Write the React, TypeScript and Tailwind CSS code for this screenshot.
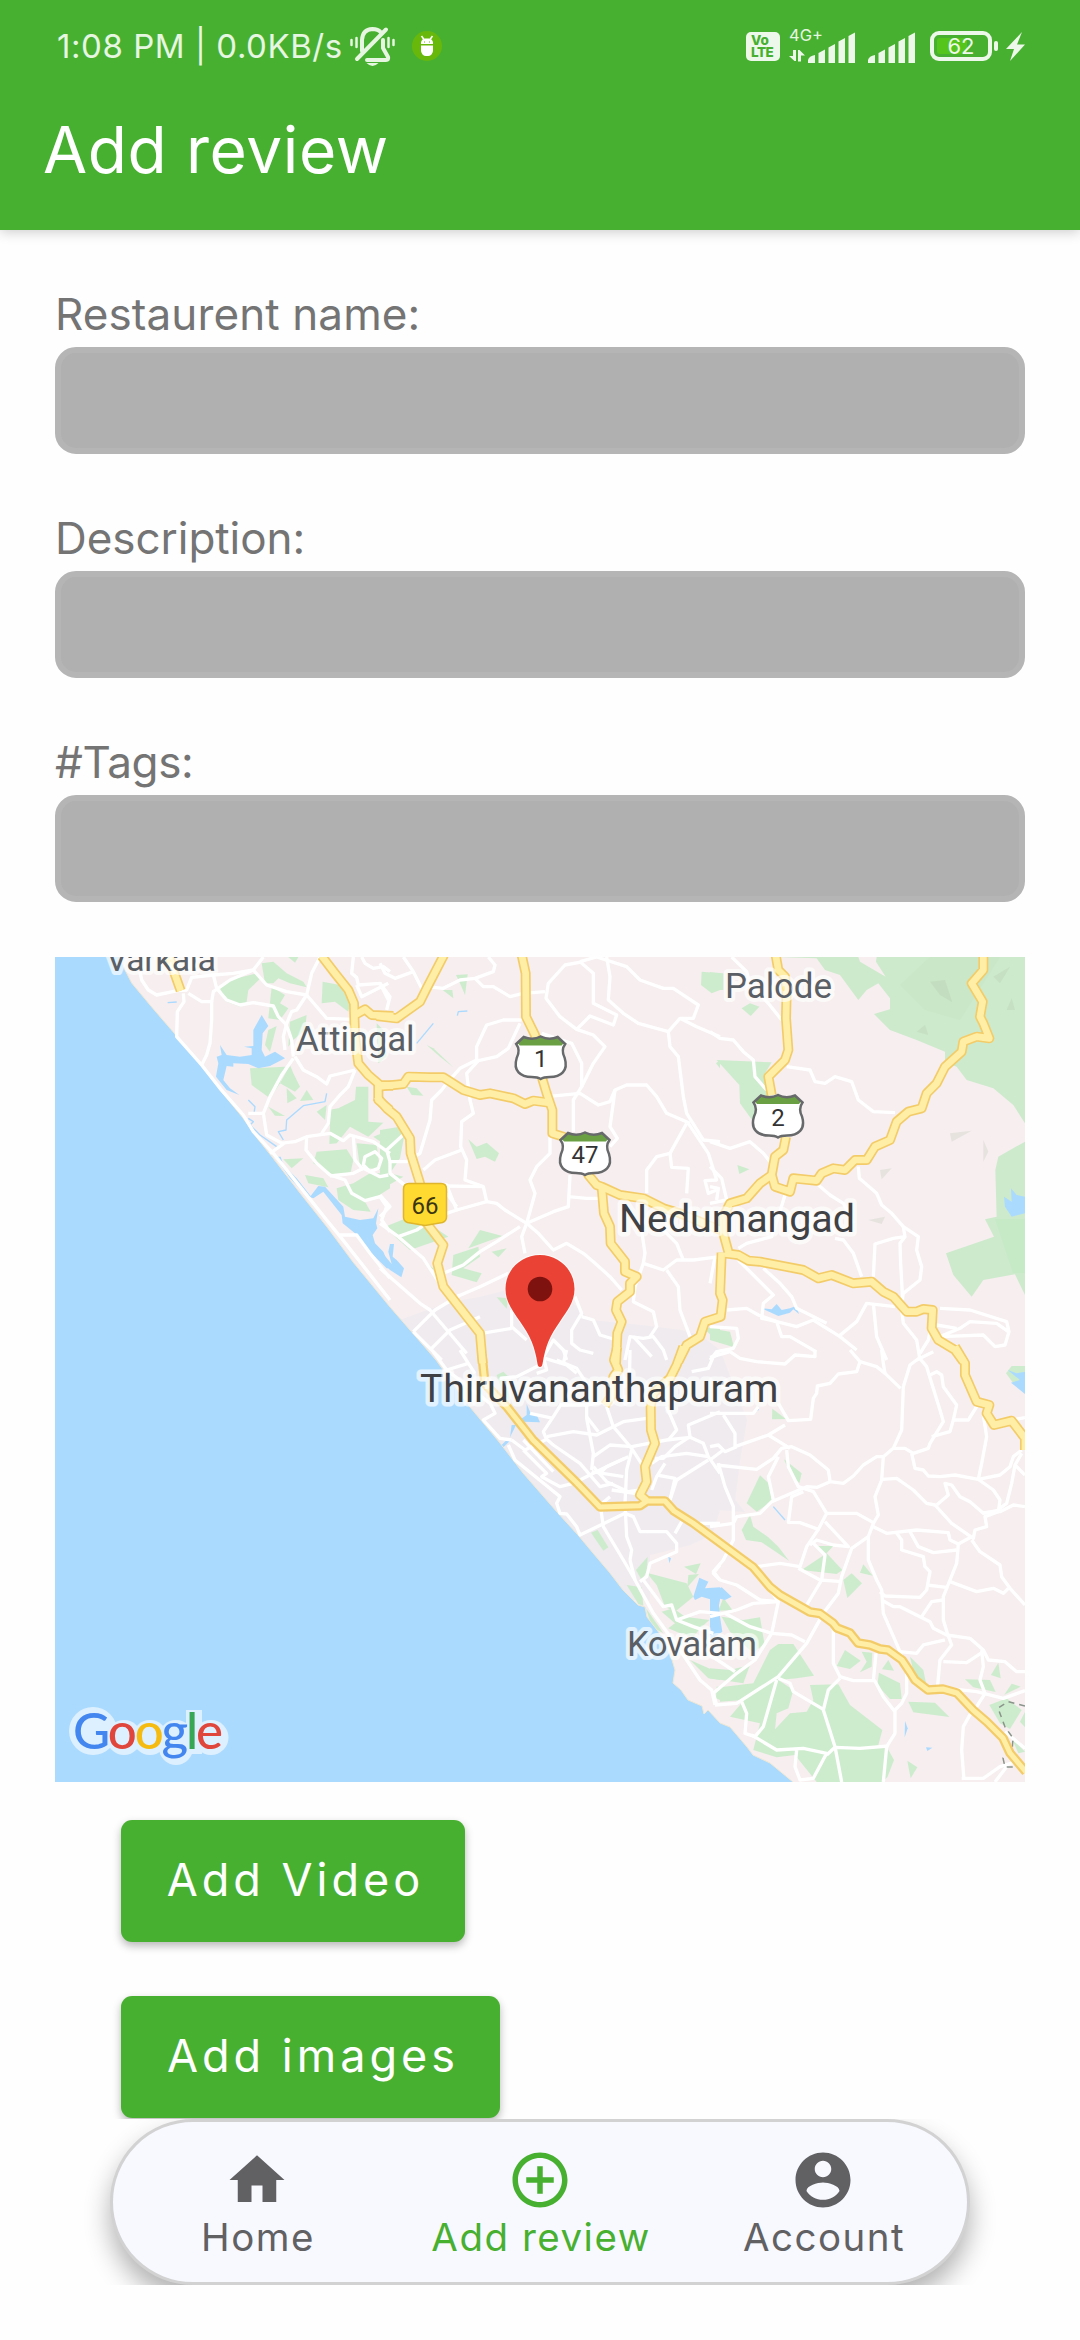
import type { ReactNode } from "react";

type Tile = { x: number; y: number; d: Partial<Record<Layer, string[]>> };
type Layer = "park" | "forest" | "relief" | "water" | "stream" | "street" | "highway";

/* Map geometry, split in tiles; every tile is drawn at three units per pixel. */
const tiles: Tile[] = [
  {
    x: 40,
    y: 940,
    d: {
      park: [
        "M540,145 570,120 650,100 665,112 625,150 620,185 600,200 560,185Z",
        "M665,70 700,65 740,100 790,125 800,142 750,130 715,115 700,130 675,130Z",
        "M745,51 775,51 765,68Z",
        "M848,125 900,135 930,190 925,215 885,185 845,190Z",
        "M695,140 735,165 720,190 745,205 720,240 685,235Z",
        "M685,270 710,258 690,335 675,315Z",
        "M750,245 800,225 795,270 760,300 745,320Z",
        "M630,385 735,380 720,430 690,475 635,435Z",
        "M750,375 760,400 780,440 765,455 720,430Z",
        "M740,445 770,475 742,490Z",
        "M800,450 820,480 780,483Z",
        "M685,500 735,528 705,527Z",
        "M948,440 985,440 985,545 1030,548 985,590 930,560 890,610 868,612 870,560 865,510 895,505 945,480Z",
        "M860,495 855,540 830,515Z",
        "M830,635 920,628 940,660 930,705 880,705 820,670Z",
        "M730,658 790,655 755,685Z",
        "M795,705 850,715 865,742 805,730Z",
        "M890,745 940,730 990,700 1050,700 1050,745 1010,770 975,785 992,815 940,810 895,780Z",
        "M1000,590 1050,570 1050,625Z",
        "M950,610 1010,615 1020,690 960,680Z",
        "M1010,250 1030,270 1040,350 1015,370Z",
      ],
      water: [
        "M665,225 685,258 668,280 665,330 675,350 705,335 735,355 690,378 655,385 625,372 580,370 580,380 560,378 550,420 570,445 598,465 560,450 528,410 535,370 530,350 545,345 540,315 560,345 600,350 635,345 635,325 612,320 640,318 640,270Z",
        "M705,650 722,650 730,675 770,715 812,768 835,738 855,740 910,800 915,830 960,840 1000,835 1015,805 1008,850 1012,865 998,885 1005,910 1030,935 1050,985 1040,985 990,935 945,880 908,850 905,825 850,755 820,775 800,768 750,715Z",
      ],
      stream: [
        "M625,480 645,500 642,520 M625,535 640,545 630,555 660,585 710,620",
        "M860,460 855,485 790,497 740,540 738,570 715,575 730,600",
        "M383,188 410,186",
      ],
      street: [
        "M300,95 305,120 325,150 350,165 412,152",
        "M412,152 440,150 455,112 520,105 580,100 640,90 670,51",
        "M430,160 432,185 412,215 410,290 485,375 540,445 610,525 640,575 700,640 780,740 860,840 905,895 1050,1080",
        "M445,160 485,185 515,185 515,240 510,310 500,345 485,375",
        "M515,185 520,155 570,120 640,90",
        "M520,105 530,145 560,180 600,195 640,188 700,198 715,230 735,250 745,270 755,300 760,350",
        "M640,90 680,135 740,155 800,165 860,235 940,238",
        "M840,51 815,100 800,165 770,210 755,215 740,250 730,290 735,330",
        "M765,350 790,390 830,410 860,432 870,408 945,390",
        "M760,355 725,405 690,470 670,520 625,520",
        "M670,520 680,585 730,612 690,640",
        "M720,610 765,605 800,590 870,580 910,602 930,585 1000,605 1050,640",
        "M945,390 925,440 900,465 870,500 865,550 845,580",
        "M800,590 798,630 830,670 870,705 915,720 935,760 975,782 1020,770 1040,800 1025,840 1050,875",
        "M870,708 940,700 970,685 1020,710 1045,705",
        "M940,590 945,660 970,690",
        "M975,650 1005,635 1025,655 1015,685 990,695 970,675Z",
        "M900,885 950,885 990,940 1050,1015",
        "M940,51 935,100 950,112 955,135 1020,130 1045,180",
        "M965,51 975,70 1000,85 1030,80 1050,95",
        "M950,135 965,170 1045,130",
      ],
      highway: [
        "M388,51 400,90 422,152",
        "M845,48 885,100 925,150 942,190 943,230 945,290 955,370 985,405 1020,435 1060,437",
        "M945,225 975,208 995,225 1060,228",
        "M1015,435 1015,480 1050,510",
      ],
    },
  },
  {
    x: 380,
    y: 940,
    d: {
      park: [
        "M0,570 60,560 75,575 60,655 30,700 70,710 0,750Z",
        "M265,598 290,620 320,608 357,640 345,665 315,650 290,657Z",
        "M228,105 263,103 255,165 240,130Z",
        "M188,150 217,150 220,175Z",
        "M965,95 1020,100 1020,150 995,160 963,135Z",
        "M80,440 110,445 130,467 95,465Z",
        "M140,315 160,325 220,382 180,350Z",
        "M15,860 90,830 160,860 205,890 90,930 50,895Z",
        "M300,870 367,888 265,925Z",
        "M220,945 295,920 300,950 250,985 305,1000 290,1027 215,1005Z",
        "M335,935 380,925 355,952Z",
        "M350,1072 385,1075 380,1106Z",
        "M115,945 165,990 150,985Z",
        "M970,1165 1020,1160 1020,1210Z",
        "M1008,370 1020,360 1020,385Z",
      ],
      water: ["M30,912 42,912 38,950 50,960 72,985 64,1012 30,990 0,960 0,930 35,972 25,935Z"],
      stream: ["M110,310 160,250", "M232,227 235,215 262,213"],
      street: [
        "M70,51 100,95 130,155",
        "M0,70 15,100 45,115 100,95",
        "M0,130 30,170 20,210",
        "M140,140 190,145 240,120 285,115 340,95 345,75 325,51",
        "M285,115 310,140 340,140 390,170 430,160 495,155",
        "M610,65 555,75 505,130 498,175 540,230 590,268 630,228 700,255 710,225 640,190 640,100 600,65",
        "M600,65 650,51 740,80 780,120 850,145 880,145 955,195 940,235 900,235 865,275 870,320 895,350 910,470 920,520 970,600 1020,605",
        "M680,51 690,110 685,180 730,220 775,250 865,275",
        "M900,235 950,260 1020,290",
        "M590,268 640,285 675,320 640,370 605,440",
        "M485,280 545,300 575,310 605,370 605,440 580,480 580,575",
        "M500,470 600,460 655,495 690,485 705,450 740,435 800,435 830,470 860,520 930,550",
        "M705,450 690,560 712,595 690,620",
        "M425,240 370,240 320,255 290,320 290,360 240,385 200,430 185,450 155,480 150,540 120,640 80,665 30,665 20,630 75,580",
        "M420,250 385,325 350,350 295,362 260,400 270,480 280,520 245,545 242,620 260,660 255,720 310,740 320,785 230,810",
        "M130,690 165,660 245,630",
        "M510,590 510,640 470,680 450,720 465,760 440,850 375,810 350,790 320,785",
        "M160,740 200,735 230,810 200,820",
        "M200,738 310,740",
        "M440,850 425,890 435,940",
        "M440,850 475,880 520,930 560,910 610,940 640,965 690,1010 725,1050",
        "M440,850 520,815 565,800 570,705",
        "M565,770 620,775 655,775",
        "M190,1000 250,975 300,935 350,905 420,860",
        "M230,1070 300,1040 385,1000",
        "M780,840 795,940 790,970 765,1040 760,1085 820,1115 830,1160 810,1190",
        "M790,970 850,990 890,960 940,960 1020,950",
        "M860,990 895,1040 900,1110 930,1190",
        "M800,760 800,690 830,650 870,640 920,550",
        "M870,640 875,682 925,685 920,760",
        "M925,550 985,640 1010,720 975,722 985,760 1010,750",
        "M780,840 850,870 890,910 910,960",
        "M585,1070 605,1120 575,1170 575,1210 600,1230 640,1240",
        "M605,1130 640,1140 660,1185 710,1200",
        "M395,1110 395,1160 440,1200",
        "M305,1180 395,1165",
        "M0,985 120,1090 150,1110 260,1240",
        "M0,850 55,890 130,955 185,1040",
        "M100,1175 165,1110 240,1065",
        "M100,1175 185,1260",
        "M150,1230 210,1170 300,1130",
        "M735,1260 750,1190 790,1195 820,1190 850,1230 860,1260",
        "M760,1190 815,1250",
        "M485,1260 520,1200 550,1230 560,1260",
        "M0,830 30,800 0,765",
        "M55,890 110,870 140,850",
        "M30,665 30,700 80,740",
        "M200,760 230,800",
      ],
      highway: [
        "M192,45 140,145 120,185 50,235 -10,228",
        "M-10,440 70,432 85,410 150,412 190,412 250,450 300,465 330,460 400,475 435,492 460,482 505,488",
        "M-10,470 20,505 50,530 90,595 92,640 120,730 140,850 190,915 172,970 190,1040 300,1180 308,1270",
        "M425,45 437,100 438,230 465,285 485,410 500,460 517,510 517,580 550,590 610,650 625,705 650,735 665,740 720,765 790,775 850,805 900,820 1020,870",
        "M665,740 672,820 690,860 692,910 735,965 735,995 770,1010 750,1030 750,1055 712,1085 708,1110 725,1145 712,1180 708,1270",
      ],
    },
  },
  {
    x: 710,
    y: 940,
    d: {
      park: [
        "M20,360 185,367 165,400 180,450 175,560 130,545 90,490 88,435Z",
        "M95,205 120,190 148,200 122,228Z",
        "M82,675 118,688 88,702Z",
        "M0,97 40,100 40,150 0,150Z",
        "M0,1165 60,1175 72,1222 0,1200Z",
      ],
      forest: [
        "M200,51 320,55 345,90 390,105 445,180 470,150 505,130 540,175 540,208 492,222 540,270 620,300 705,335 705,365 740,380 770,420 850,445 910,495 945,550 945,51 500,51 498,65 527,110 450,65 445,51Z",
        "M945,605 865,650 856,690 860,830 825,838 852,890 708,940 730,1005 785,1070 820,1020 915,1003 945,1065Z",
      ],
      relief: [
        "M660,125 705,120 727,187 690,165Z",
        "M850,110 900,80 870,130Z",
        "M620,275 645,255 655,285Z",
        "M890,210 905,175 915,210Z",
        "M720,580 785,572 725,605Z",
        "M510,690 545,685 515,718Z",
        "M820,600 835,635 820,665Z",
        "M475,840 525,830 515,852Z",
      ],
      water: [
        "M882,770 905,785 903,745 920,765 945,770 945,820 905,830 885,800Z",
        "M155,1105 185,1108 200,1092 215,1110 240,1105 258,1098 267,1122 250,1108 240,1118 205,1128Z",
      ],
      street: [
        "M65,51 110,95 120,130 175,190 215,240",
        "M0,275 30,295 70,300 100,335 130,360 135,410 170,450",
        "M230,380 300,390 315,425 345,430 375,410 425,425 445,480 490,515 555,518",
        "M0,605 60,625 120,605 160,640 180,665",
        "M0,680 35,715 50,780 0,790",
        "M0,740 25,745 20,780",
        "M325,735 360,765 400,790 430,850",
        "M375,895 400,900 430,940 455,1010",
        "M445,680 448,715 500,760 515,795 545,820 580,860 625,890 620,930 635,980 630,1020 580,1060 575,1085",
        "M580,860 585,890 570,910 572,970 578,1080",
        "M585,890 550,895 495,912 490,1010",
        "M225,765 205,830 185,890 110,910 85,925",
        "M85,960 190,1065 160,1090 155,1135 200,1145 215,1190 240,1190 318,1235",
        "M50,1110 110,1105 145,1125 200,1145 260,1160 310,1140 390,1190 440,1230",
        "M160,985 210,1030 245,1070 260,1105 350,1150",
        "M385,1190 440,1145 470,1090 555,1100",
        "M490,1090 500,1190 530,1260",
        "M575,1110 580,1150 620,1200 630,1260",
        "M690,1105 780,1110 890,1145 897,1175 885,1215 855,1220 820,1185 690,1190 750,1165 780,1145 860,1150 895,1175",
        "M680,1155 740,1165",
        "M665,1150 655,1200 630,1240",
        "M0,1160 80,1165 85,1195 70,1225 20,1235 0,1260",
        "M15,950 0,1030",
      ],
      highway: [
        "M197,45 205,90 225,110 230,150 228,235 235,330 225,360 175,410 185,465",
        "M228,590 220,630 195,650 185,705 150,730 110,775 60,790 40,830 40,880 55,935",
        "M185,705 195,740 240,755 250,715 320,722 335,700 370,685 405,690 435,660 470,660 495,620 540,600 560,545 595,515 635,505 650,460 680,430 705,380 755,335 760,305 800,290 838,295 820,250 810,230 818,185 785,130 820,90 820,45",
        "M45,940 85,945 115,962 150,965 280,990 325,1015 365,1005 430,1030 485,1025 520,1055 550,1070 590,1115 620,1115 640,1107 668,1110 665,1165 685,1200 735,1230 760,1265",
        "M35,938 30,1060 38,1080 32,1130 -15,1145 -30,1190 -70,1215 -95,1265",
      ],
    },
  },
  {
    x: 380,
    y: 1350,
    d: {
      park: [
        "M633,548 653,540 685,592 670,602Z",
        "M768,660 803,620 800,665 785,690Z",
        "M800,668 920,700 940,740 885,785 855,770 830,705Z",
        "M740,705 785,712 790,767 775,762Z",
        "M925,675 957,672 922,712Z",
        "M912,650 962,640 948,672Z",
        "M845,785 880,775 915,800 988,810 960,835 940,862 900,850 865,835 885,820Z",
        "M798,775 850,850 815,830Z",
        "M930,930 1020,970 1020,990 985,985Z",
        "M350,75 370,65 390,85 385,150 365,120Z",
        "M1010,1010 1020,1010 1020,1050 1008,1045Z",
      ],
      water: [
        "M440,162 450,185 470,195 480,217 430,215 423,207 440,195Z",
        "M958,683 985,695 975,715 1020,712 1020,750 1000,850 998,750 965,740 945,750 940,740Z",
        "M362,288 385,265 392,270 370,292Z",
        "M395,225 408,225 390,262Z",
        "M865,620 873,625 868,640Z",
      ],
      street: [
        "M160,5 200,60 265,40 240,0",
        "M265,40 285,70",
        "M200,60 330,160 345,190 310,210 360,265 395,270",
        "M385,285 405,330 540,440 530,460 540,490 560,492 590,530 600,555 735,490",
        "M395,270 435,300 500,268 520,285 600,340 660,410 700,400",
        "M430,300 500,370 485,380 540,410 580,400 640,370 690,345 745,320",
        "M430,270 520,365",
        "M500,270 490,245 520,200 545,160",
        "M500,260 580,245 650,255 730,215 800,205",
        "M490,20 500,60 470,70",
        "M495,25 560,45 590,70",
        "M620,165 620,205 640,310 635,360",
        "M620,200 655,245",
        "M680,170 700,230 755,295 790,350",
        "M755,300 740,360 735,460 740,560 755,600 750,630",
        "M640,320 690,285 755,290 860,270 930,262 970,280 985,320 920,310 845,320 815,340",
        "M640,350 680,395 745,425 780,420",
        "M635,365 730,380",
        "M695,420 780,432",
        "M660,460 670,530 730,630 765,690 820,790 900,900 960,990 995,1020 1005,1065",
        "M735,490 760,500 780,545 860,545 890,580 890,605 810,640 800,680 780,695",
        "M750,630 765,690",
        "M790,690 850,770 875,765 890,810 940,830 1000,850",
        "M890,810 960,785 1020,790",
        "M885,550 905,515",
        "M870,450 890,390 985,330",
        "M825,325 850,325 885,290 930,260 925,225 1020,185",
        "M985,320 1020,370",
        "M855,340 830,380 815,420",
        "M830,375 885,385 870,450",
        "M750,0 748,110",
        "M560,0 550,40",
        "M360,85 410,80 460,55 490,40",
        "M530,30 590,55 620,100",
        "M935,65 985,55 1000,20 1020,10",
        "M860,170 890,240 865,270",
        "M960,520 1020,520",
        "M1020,645 1000,670 1020,690",
        "M545,165 620,165 680,155",
        "M735,325 680,350 660,370",
        "M450,190 520,205",
        "M660,465 690,440",
      ],
      highway: [
        "M712,-10 702,30 715,60 700,80 700,130 675,165",
        "M910,-10 890,45 870,85 820,130 812,170 813,240 825,280 795,350 800,395 780,435 800,452",
      ],
    },
  },
  {
    x: 710,
    y: 1350,
    d: {
      park: [
        "M150,376 182,405 185,455 140,485 110,460Z",
        "M120,495 130,530 175,562 205,590 237,632 155,577 108,570 95,540Z",
        "M222,328 275,370 268,400 240,370Z",
        "M187,176 228,207 186,208Z",
        "M400,690 425,670 456,700 412,744Z",
        "M460,643 488,677 450,668Z",
        "M275,660 350,610 397,660 380,672Z",
        "M315,588 370,588 345,614Z",
        "M180,900 205,882 250,882 312,977 260,985 205,990 100,1050 30,1055 30,1012 130,1000Z",
        "M35,800 100,810 150,802 163,880 130,910 60,845Z",
        "M40,743 67,780 25,782Z",
        "M0,955 60,960 120,945 100,1000 0,985Z",
        "M110,1040 205,990 250,1020 235,1075 200,1090 195,1138 240,1090 290,1085 310,1050 300,1005 385,1003 420,1065 517,1140 505,1185 530,1190 552,1230 532,1282 515,1296 320,1296 255,1215 200,1222 130,1200 150,1120 60,1100 90,1065Z",
        "M405,900 452,932 420,957 380,948Z",
        "M455,905 487,908 485,950 450,967 470,935Z",
        "M535,930 552,962 516,958Z",
        "M507,968 570,1000 575,1047 540,1047 502,1005Z",
        "M595,1055 675,1058 718,1101 610,1087Z",
        "M600,920 640,960 648,1000 615,985Z",
        "M765,988 840,990 857,1026 790,1012Z",
        "M865,938 872,985 843,975Z",
        "M905,1001 932,1010 883,1034Z",
        "M838,1065 890,1045 935,1080 900,1137 870,1120Z",
        "M592,1232 622,1252 602,1285Z",
        "M888,70 905,48 945,48 945,120 910,100Z",
        "M905,1165 945,1205 925,1210Z",
        "M945,1085 930,1115 945,1132Z",
      ],
      water: [
        "M0,725 35,712 65,740 45,750 25,745 30,800 37,845 0,870Z",
        "M893,60 920,70 945,65 945,132 903,98 930,90Z",
        "M585,1113 593,1135 584,1162Z",
        "M648,1192 667,1193 652,1203Z",
        "M145,170 147,180 130,188Z",
      ],
      stream: ["M190,470 225,510"],
      street: [
        "M0,22 60,5 90,25 140,35 225,42 255,15 315,20 315,0",
        "M420,0 450,35 440,65 385,72 360,100 322,108 320,130 310,145 302,208 235,212 205,160",
        "M450,35 500,50 525,70 572,115",
        "M515,0 520,40 525,70",
        "M670,5 620,30 600,45 580,110 575,240 550,295 520,320 515,390 495,440 505,495 490,520 475,560 475,630 500,690 515,720 520,790 570,905 590,960 590,1030 575,1060 555,1080 555,1150 530,1190 520,1296",
        "M625,20 650,50 665,100 690,180 700,215 660,280 655,295 610,310 585,295 550,295",
        "M660,75 680,65 695,75 700,110 740,165 730,210 720,245 665,260",
        "M730,210 775,210 800,170",
        "M520,320 500,320 460,345 430,378 400,400 360,395 322,412 290,410 185,455 150,490 80,500 70,520 0,530",
        "M820,195 830,260 815,340 805,388 735,375 690,380 655,378 640,360 615,355 605,310",
        "M805,388 870,375 900,350 910,320 935,300",
        "M805,388 850,420 870,450 865,485 825,500 830,530 795,540 790,565 725,520 675,465 650,460 610,420 560,385 515,388",
        "M935,310 915,345 905,400 890,460 865,478",
        "M915,345 945,375",
        "M815,488 870,485 910,465 945,470",
        "M680,465 715,435 705,400 725,405 750,440 780,455 820,490 870,480",
        "M785,560 745,582 740,640 720,690 700,740 700,810 712,850 725,885 690,930 683,1005",
        "M785,570 810,605 870,645 875,680 900,715 945,765",
        "M720,695 800,725 850,715 880,730 895,715",
        "M490,530 530,550 620,540 715,548 720,570 745,582",
        "M600,545 625,590 670,608 740,600",
        "M560,550 575,570 575,600 640,620 645,650 660,665 650,720 630,742 525,738 510,725",
        "M650,705 710,712",
        "M515,750 550,770 570,770 660,815 670,835 710,855 780,865 820,900 835,930 885,935 920,965 945,965",
        "M635,800 665,755 700,750",
        "M705,870 640,885 620,910 570,905",
        "M815,900 820,950 810,990 825,1030 800,1070",
        "M700,935 770,938 820,905",
        "M740,1018 800,1025 880,1045 945,1022",
        "M785,1085 760,1130 755,1200 762,1290",
        "M755,1285 820,1285 870,1250 920,1235",
        "M855,1296 890,1250",
        "M0,190 60,190 130,190 145,170",
        "M40,195 75,250 75,290 175,255 225,225",
        "M80,290 45,305 25,285 0,290",
        "M25,340 45,410 70,470 70,570 40,630 10,665 30,690 80,705 150,750 205,755",
        "M0,330 40,300 M20,345 140,358 190,325 215,295 245,290 300,315 355,360 360,392",
        "M175,255 240,295",
        "M205,320 175,380 190,450",
        "M230,300 235,350 265,410 310,425 350,490 440,490 490,518",
        "M280,425 245,440 240,480 235,517 270,518 325,538 350,490",
        "M325,538 290,590 270,650 210,640 140,650",
        "M345,515 415,590 370,585 320,570 300,585",
        "M475,560 425,595 395,680 385,730 340,790 290,880 205,980 80,1060 15,1065",
        "M310,580 345,615 335,690 290,765",
        "M265,655 330,690 395,695",
        "M170,705 205,755 185,850 135,930 80,970 10,1030 20,1065",
        "M205,755 130,760 80,780 0,800",
        "M45,790 120,830 185,850 245,855 285,875",
        "M75,965 0,915",
        "M370,835 370,940 390,980 430,992 490,992 498,910",
        "M390,985 355,1020 340,1080 375,1190 395,1296",
        "M205,985 240,1000 250,1025 340,1078",
        "M200,990 160,1130 135,1160 105,1150 110,1090 95,1055",
        "M125,1155 200,1200 280,1195 350,1210 310,1285 270,1290 255,1250 260,1200",
        "M350,1215 375,1192 450,1195 535,1188",
        "M493,990 520,1040 555,1085",
        "M885,1145 945,1195",
        "M905,210 945,203",
      ],
      highway: [
        "M735,-10 765,40 765,75 800,155 838,165 830,190 852,225 905,212 945,265 945,300",
      ],
    },
  },
];

/* National highway 66 and its continuation to the south-east, in page pixels. */
const trunk =
  "M482 1355 L485 1384 L507 1407 L533 1440 L577 1483 L600 1507 L640 1505.7 L647 1501 L665 1501 L674 1511 L693 1523 L753 1567 L770 1587 L780 1595 L810 1612 L820 1613.500 L833 1623 L837 1628 L850 1633 L858 1643 L870 1645 L880 1649 L888 1650 L902 1660 L910 1672 L915 1680 L928 1690 L943 1689 L957 1693 L973 1710 L987 1722 L1003 1738 L1010 1753 L1026 1772";

const coast =
  "120,957 125,970 131.700,983 150,1005 173,1031.700 203,1068 220,1090 243,1118 257,1138 273,1158 300,1193 327,1227 353,1262 390,1307 410,1330 436,1360 470,1407 500,1443 523,1473 557,1512 578,1535 593,1553 610,1573 623,1590 638,1605 645,1607 647,1617 657,1630 667,1643 675,1670 673,1683 681,1690 688,1700 702,1706 704,1714 708,1710 720,1723 730,1727 747,1747 753,1755 770,1763 793,1782";

function Tiles({ layer, className }: { layer: Layer; className: string }) {
  return (
    <g className={className} strokeLinejoin="round">
      {tiles.map((t) => (
        <g key={`${t.x}-${t.y}`} transform={`translate(${t.x} ${t.y}) scale(0.33333)`}>
          {(t.d[layer] ?? []).map((p) => (
            <path key={p} d={p} />
          ))}
        </g>
      ))}
    </g>
  );
}

function Shield({ x, y, label }: { x: number; y: number; label: string }) {
  return (
    <g transform={`translate(${x} ${y})`}>
      <path
        d="M-17,2 Q-8,5.500 0,1.500 Q8,5.500 17,2 L24.500,9 Q20,15 24,23 C28,36 20,42 9,42 Q3,42 0,44 Q-3,42 -9,42 C-20,42 -28,36 -24,23 Q-20,15 -24.500,9Z"
        className="fill-white"
      />
      <path d="M-17,2 Q-8,5.500 0,1.500 Q8,5.500 17,2 L23,8 L21,10.500 H-21 L-23,8Z" className="fill-[#6a9f43]" />
      <path
        d="M-17,2 Q-8,5.500 0,1.500 Q8,5.500 17,2 L24.500,9 Q20,15 24,23 C28,36 20,42 9,42 Q3,42 0,44 Q-3,42 -9,42 C-20,42 -28,36 -24,23 Q-20,15 -24.500,9Z"
        className="fill-none stroke-[#67696b] stroke-[2.5px]"
      />
      <text y="32" textAnchor="middle" className="fill-[#333] text-[24px]">
        {label}
      </text>
    </g>
  );
}

function Label({ x, y, w, size, dark, children }: { x: number; y: number; w: number; size: number; dark?: boolean; children: string }) {
  return (
    <text
      x={x}
      y={y}
      textLength={w}
      fontSize={size}
      paintOrder="stroke"
      strokeLinejoin="round"
      className={dark ? "fill-[#3f4144] stroke-white/65 stroke-[9px]" : "fill-[#5a5f65] stroke-white/65 stroke-[8px]"}
    >
      {children}
    </text>
  );
}

function MapView() {
  return (
    <svg viewBox="55 957 970 825" className="mt-[55px] block h-[825px] w-[970px] bg-[#f6eeef] font-['Roboto',sans-serif]">
      <path
        d="M400,1320 447,1303 480,1297 520,1287 560,1290 590,1320 640,1325 680,1330 700,1335 720,1350 747,1420 740,1460 735,1500 745,1512 720,1510 712,1535 690,1545 650,1555 650,1600 620,1600Z"
        className="fill-[#efebef]"
      />
      <Tiles layer="park" className="fill-[#cdeccd]" />
      <Tiles layer="forest" className="fill-[#cdeacc]" />
      <path d="M995,1219 1025,1219 1025,1273 1013,1273Z" className="fill-[#c6eac6]" />
      <path d="M930,957 1000,957 960,1020 925,1010 900,985Z" className="fill-[#cae7c8]" />
      <Tiles layer="relief" className="fill-[#a8b8a0]/20" />
      <Tiles layer="water" className="fill-[#abdaff]" />
      <Tiles layer="stream" className="fill-none stroke-[#abdaff] stroke-[4px]" />
      <path d={`M${coast} L55,1782 L55,957Z`} className="fill-[#abdaff]" />
      <path d={`M${coast}`} className="fill-none stroke-[#f0e8d2] stroke-1" />
      <Tiles layer="street" className="fill-none stroke-white stroke-[10px]" />
      <path
        d="M1025 1706 L1008 1701.700 L998 1708 L1005 1727 L1013 1738 L1012 1752 L1003 1758 L1005 1767 L1012 1767 L1025 1762"
        strokeDasharray="6 5"
        className="fill-none stroke-[#8a948a] stroke-[1.5px]"
      />
      <Tiles layer="highway" className="fill-none stroke-[#f3cc69] stroke-[30px]" />
      <path d={trunk} strokeLinejoin="round" className="fill-none stroke-[#f3cc69] stroke-[9.5px]" />
      <Tiles layer="highway" className="fill-none stroke-[#ffefa6] stroke-[20px]" />
      <path d={trunk} strokeLinejoin="round" className="fill-none stroke-[#ffefa6] stroke-[5px]" />

      <Label x={106} y={971} w={110} size={34}>Varkala</Label>
      <Label x={296} y={1050.5} w={118.5} size={35}>Attingal</Label>
      <Label x={725} y={997.5} w={107} size={35}>Palode</Label>
      <Label x={619} y={1232} w={236} size={39.5} dark>Nedumangad</Label>
      <Label x={627} y={1656} w={130} size={35}>Kovalam</Label>

      <Shield x={540.7} y={1035} label="1" />
      <Shield x={585} y={1131} label="47" />
      <Shield x={778} y={1093.5} label="2" />
      <path
        d="M409 1183.500 h32 q5.500 0 5.500 5.500 v28 q0 4 -4 5.500 l-17.500 3 l-17.500 -3 q-4 -1.500 -4 -5.500 v-28 q0 -5.500 5.500 -5.500Z"
        className="fill-[#ffda30] stroke-[#dfb52c] stroke-[1.5px]"
      />
      <text x="425" y="1214" textAnchor="middle" className="fill-[#3c3511] text-[24px]">66</text>

      <Label x={420} y={1401.5} w={358.5} size={39.5} dark>Thiruvananthapuram</Label>

      <path
        d="M540,1255 C559,1255 574.500,1270 574.500,1289 C574.500,1302 567,1311 560,1321.500 C550,1336 545.500,1345 542.500,1364 Q542,1367 540,1367 Q538,1367 537.500,1364 C534.500,1345 530,1336 520,1321.500 C513,1311 505.500,1302 505.500,1289 C505.500,1270 521,1255 540,1255Z"
        paintOrder="stroke"
        className="fill-[#ea4335] stroke-white/80 stroke-2"
      />
      <circle cx="540" cy="1289" r="12.300" className="fill-[#7d120f]" />

      <g className="fill-white opacity-60">
        <circle cx="93" cy="1731" r="24" />
        <circle cx="124" cy="1737.500" r="17.500" />
        <circle cx="150" cy="1737.500" r="17.500" />
        <circle cx="176" cy="1737.500" r="17.500" />
        <circle cx="176" cy="1748" r="17" />
        <rect x="186" y="1710" width="16" height="44" />
        <circle cx="211" cy="1737.500" r="17.500" />
      </g>
      <text x="73" y="1748.500" fontSize="51" textLength="150" className="font-['Lato',sans-serif] font-medium">
        <tspan className="fill-[#4486f0]">G</tspan>
        <tspan className="fill-[#e0463b]">o</tspan>
        <tspan className="fill-[#f6bb10]">o</tspan>
        <tspan className="fill-[#4486f0]">g</tspan>
        <tspan className="fill-[#37a755]">l</tspan>
        <tspan className="fill-[#e0463b]">e</tspan>
      </text>
    </svg>
  );
}

function SignalBars() {
  return (
    <svg viewBox="0 0 48 31" className="h-[31px] w-12 fill-[#edf8ea]">
      <path d="M0 31 V28 Q1 24 7 23 V31Z M10.500 31 V21 L17 17.500 V31Z M20.500 31 V15.500 L27 12 V31Z M30.500 31 V9.500 L37 6 V31Z M40.500 31 V4 L47 .5 V31Z" />
    </svg>
  );
}

function StatusBar() {
  return (
    <div className="flex h-[92px] items-center pl-[57px] text-[#e6f6e1]">
      <span className="w-[293px] text-[33px] leading-none tracking-[0.55px] whitespace-nowrap">1:08 PM | 0.0KB/s</span>
      <svg viewBox="0 0 45 40" className="h-10 w-[45px] fill-none stroke-[#e6f6e1]" strokeLinecap="round" strokeLinejoin="round">
        <path d="M1.500 14 v5 M6.500 12 v9 M38.500 12 v9 M43.500 14 v5" strokeWidth="2.500" />
        <path d="M12 25 V14 Q12.500 3.500 22.500 3 Q28 3 31 6.500 M33 14 V22 L38 31 Q39 34 36 34 H17" strokeWidth="4" />
        <path d="M36 3.500 L7 33" strokeWidth="4" />
        <path d="M16.500 37 h12 q-6 6 -12 0Z" className="fill-[#e6f6e1]" strokeWidth="0" />
      </svg>
      <svg viewBox="0 0 30 30" className="ml-[17px] size-[30px]">
        <circle cx="15" cy="15" r="15" className="fill-[#68b80c]" />
        <path d="M9 13 V11.500 Q9.500 8 13 7.500 H17 Q20.500 8 21 11.500 V13Z M9 14.500 H21 V20 Q20 25 16 25 H14 Q10 25 9 20Z" className="fill-white" />
        <path d="M9.500 5 L12 8.500 M20.500 5 L18 8.500" className="stroke-white stroke-[1.5px]" />
        <path d="M12 11 h1 M17 11 h1" className="stroke-[#68b80c]" />
      </svg>
      <div className="ml-[304px] flex h-[29px] w-[34px] flex-col items-start justify-center rounded-[5px] bg-[#edf8ea] pl-[5px] text-[13.5px] leading-[12px] font-extrabold text-[#48b031]">
        <span>Vo</span>
        <span className="tracking-[-0.5px]">LTE</span>
      </div>
      <div className="relative ml-[9px] flex h-[34px] items-end">
        <span className="absolute -top-[2px] left-0 text-[16.5px] leading-none">4G+</span>
        <svg viewBox="0 0 17 12" className="mb-[1px] h-3 w-[17px] fill-[#edf8ea]">
          <path d="M4 0 H7 V11 H5.500 L0 6 H4Z M9 11.500 V0 H10.500 L16 5.500 H12 V11.500Z" />
        </svg>
        <div className="ml-[2px]">
          <SignalBars />
        </div>
      </div>
      <div className="ml-3 flex h-[34px] items-end">
        <SignalBars />
      </div>
      <div className="ml-[14px] flex items-center">
        <div className="relative flex h-[30px] w-[62px] items-center justify-center rounded-[9px] border-4 border-[#edf8ea] text-[22px] leading-none text-[#edf8ea]">
          <div className="absolute top-[3px] left-[3px] h-4 w-[30px] rounded-[3px] bg-[#55c51b]" />
          <span className="relative">62</span>
        </div>
        <div className="ml-[2px] h-[10px] w-1 rounded-[2px] bg-[#edf8ea]" />
        <svg viewBox="0 0 19 29" className="ml-2 h-[29px] w-[19px] fill-[#edf8ea]">
          <path d="M16 0 L0 17 H8 L4 29 L19 12.500 H11Z" />
        </svg>
      </div>
    </div>
  );
}

function Field({ label, tracking }: { label: string; tracking: string }) {
  return (
    <label className="mt-[51px] block">
      <span className={`block h-[66px] text-[44px] leading-[66px] text-[#747474] ${tracking}`}>{label}</span>
      <span className="block h-[107px] rounded-[21px] border-[6px] border-[#b5b5b5] bg-[#b0b0b0]" />
    </label>
  );
}

function ActionButton({ className, children }: { className: string; children: string }) {
  return (
    <button
      className={`flex h-[122px] items-center justify-center rounded-[11px] bg-[#48b031] pb-1 pl-[5px] text-[45px] leading-none tracking-[4px] whitespace-nowrap text-white shadow-[0_4px_8px_rgba(0,0,0,0.28)] ${className}`}
    >
      {children}
    </button>
  );
}

function NavItem({ label, active, children }: { label: string; active?: boolean; children: ReactNode }) {
  return (
    <div className={`flex w-[283px] flex-col items-center ${active ? "text-[#48b031]" : "text-[#616164]"}`}>
      <svg viewBox="0 0 24 24" className="size-[66px] fill-current">
        {children}
      </svg>
      <span className="pl-[2px] text-[38.5px] leading-[48px] tracking-[1.5px] whitespace-nowrap">{label}</span>
    </div>
  );
}

export default function App() {
  return (
    <div className="flex h-[2340px] w-[1080px] flex-col overflow-hidden bg-[#fefefe] font-['Inter',sans-serif]">
      <header className="relative z-10 h-[230px] shrink-0 bg-[#48b031] shadow-[0_2px_12px_rgba(0,0,0,0.2)]">
        <StatusBar />
        <h1 className="pl-[43px] text-[64px] leading-[116px] tracking-[0.6px] text-white">Add review</h1>
      </header>

      <main className="h-[1889px] shrink-0 overflow-hidden px-[55px]">
        <Field label="Restaurent name:" tracking="tracking-[0.1px]" />
        <Field label="Description:" tracking="tracking-[-0.05px]" />
        <Field label="#Tags:" tracking="tracking-[-0.4px]" />
        <MapView />
        <div className="mt-[38px] ml-[66px] flex flex-col gap-[54px]">
          <ActionButton className="w-[344px]">Add Video</ActionButton>
          <ActionButton className="w-[379px]">Add images</ActionButton>
        </div>
      </main>

      <div className="flex h-[166px] shrink-0 justify-center overflow-hidden">
        <nav className="flex h-[166px] w-[860px] justify-center rounded-full border-[3px] border-[#d2d2d2] bg-[#f8f9ff] pt-[25px] shadow-[0_14px_26px_rgba(0,0,0,0.3)]">
          <NavItem label="Home">
            <path d="M10 20v-6h4v6h5v-8h3L12 3 2 12h3v8z" />
          </NavItem>
          <NavItem label="Add review" active>
            <path d="M13 7h-2v4H7v2h4v4h2v-4h4v-2h-4V7zm-1-5C6.480 2 2 6.480 2 12s4.480 10 10 10 10-4.480 10-10S17.520 2 12 2zm0 18c-4.410 0-8-3.590-8-8s3.590-8 8-8 8 3.590 8 8-3.590 8-8 8z" />
          </NavItem>
          <NavItem label="Account">
            <path d="M12 2C6.480 2 2 6.480 2 12s4.480 10 10 10 10-4.480 10-10S17.520 2 12 2zm0 3c1.660 0 3 1.340 3 3s-1.340 3-3 3-3-1.340-3-3 1.340-3 3-3zm0 14.200c-2.500 0-4.710-1.280-6-3.220.03-1.990 4-3.080 6-3.080 1.990 0 5.970 1.090 6 3.080-1.290 1.940-3.500 3.220-6 3.220z" />
          </NavItem>
        </nav>
      </div>
    </div>
  );
}
